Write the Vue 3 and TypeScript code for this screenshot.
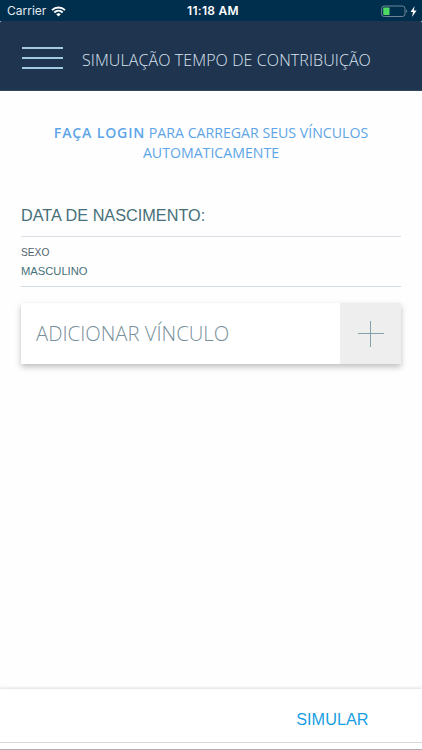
<script setup lang="ts">
import { ref } from 'vue'

const title = ref('SIMULAÇÃO TEMPO DE CONTRIBUIÇÃO')
const gender = ref('MASCULINO')
</script>

<template>
  <div class="screen">
    <div class="status">
      <div class="carrier">
        <span>Carrier</span>
        <svg class="wifi" width="15" height="11" viewBox="0 0 15 11">
          <path d="M1 4.100C4.700 .6 10.300 .6 14 4.100M3.300 6.500C5.700 4.200 9.300 4.200 11.700 6.500" fill="none" stroke="#fff" stroke-width="1.9" />
          <path d="M5.200 8.200C6.500 7 8.500 7 9.800 8.200L7.500 10.500Z" fill="#fff" />
        </svg>
      </div>
      <div class="clock">11:18 AM</div>
      <div class="power">
        <svg width="37" height="13" viewBox="0 0 37 13">
          <rect x="0.600" y="1" width="23.400" height="10.500" rx="2.600" fill="none" stroke="#6d8798" stroke-width="1" />
          <rect x="2.200" y="2.600" width="6.300" height="7.300" rx="0.600" fill="#4cd964" />
          <path d="M25.200 4.600C26.600 5.200 26.600 7.300 25.200 7.900Z" fill="#6d8798" />
          <path d="M33.600 1L29.600 7H32L31 12L35.600 5.500H32.800Z" fill="#fff" />
        </svg>
      </div>
    </div>
    <header class="header">
      <button class="menu" aria-label="Menu"><i></i><i></i><i></i></button>
      <h1>{{ title }}</h1>
    </header>
    <main class="content">
      <p class="login">
        <b>FAÇA LOGIN</b> PARA CARREGAR SEUS VÍNCULOS<br />AUTOMATICAMENTE
      </p>
      <div class="birth">DATA DE NASCIMENTO:</div>
      <div class="gender">
        <span class="label">SEXO</span>
        <span class="value">{{ gender }}</span>
      </div>
      <div class="card">
        <span class="card-text">ADICIONAR VÍNCULO</span>
        <button class="add" aria-label="Adicionar">
          <svg width="26" height="26" viewBox="0 0 26 26">
            <path d="M12.500 0V26M0 12.500H26" stroke="#82a3ab" stroke-width="1" fill="none" />
          </svg>
        </button>
      </div>
    </main>
    <footer class="footer">
      <button class="simulate">SIMULAR</button>
    </footer>
    <div class="bottom"></div>
  </div>
</template>

<style>
body {
  margin: 0;
  background: #fff;
}
</style>

<style scoped>
.screen {
  width: 422px;
  height: 750px;
  display: flex;
  flex-direction: column;
  overflow: hidden;
  background: #fefefe;
  font-family: "Liberation Sans", Arial, sans-serif;
}
button {
  border: 0;
  padding: 0;
  background: none;
  font: inherit;
}
.status {
  height: 21px;
  flex: none;
  box-sizing: border-box;
  display: grid;
  grid-template-columns: 1fr auto 1fr;
  align-items: center;
  padding: 1px 3px 0 7px;
  background: #002e4d;
  color: #fff;
  font: 12px/20px Inter, sans-serif;
}
.carrier {
  display: flex;
  align-items: center;
  gap: 5px;
  letter-spacing: 0;
  color: #e4ebef;
}
.clock {
  font-weight: 600;
  letter-spacing: 0.3px;
}
.power {
  display: flex;
  justify-content: flex-end;
  padding-right: 1px;
}
.header {
  height: 70px;
  flex: none;
  box-sizing: border-box;
  display: flex;
  align-items: center;
  padding: 4px 0 0 22px;
  background: #1f344e;
  border-bottom: 1px solid #34475e;
  border-radius: 1.500px 1.500px 0 0;
}
.menu {
  width: 41px;
  display: flex;
  flex-direction: column;
  gap: 8px;
}
.menu i {
  height: 2px;
  background: #a3c9e3;
}
h1 {
  margin: 4px 0 0 19px;
  font: 300 16px/22px "Open Sans", sans-serif;
  letter-spacing: 0.1px;
  color: #dce5f2;
  white-space: nowrap;
}
.content {
  flex: 1;
  padding: 32px 21px 0;
}
.login {
  margin: 0;
  text-align: center;
  font: 14.150px/20px "Open Sans", sans-serif;
  color: #5da5e8;
  white-space: nowrap;
}
.login b {
  font-weight: 600;
  letter-spacing: 0.8px;
}
.birth {
  margin-top: 41px;
  height: 32px;
  border-bottom: 1px solid #d9dfe4;
  font-size: 16.250px;
  line-height: 22px;
  color: #467079;
}
.gender {
  height: 49px;
  display: flex;
  flex-direction: column;
  border-bottom: 1px solid #d3dce5;
  color: #467079;
}
.label {
  margin-top: 9px;
  font-size: 10.200px;
  line-height: 14px;
  color: #52636e;
}
.value {
  margin-top: 4px;
  font-size: 11.200px;
  line-height: 14px;
}
.card {
  margin-top: 16px;
  height: 61px;
  display: flex;
  background: #fff;
  box-shadow: 0 3px 6px rgba(0, 0, 0, 0.25);
}
.card-text {
  flex: 1;
  padding-left: 15px;
  font: 300 20.250px/60px "Open Sans", sans-serif;
  color: #78909a;
  white-space: nowrap;
}
.add {
  width: 61px;
  display: flex;
  align-items: center;
  justify-content: center;
  background: #eee;
}
.footer {
  height: 54px;
  flex: none;
  box-sizing: border-box;
  display: flex;
  align-items: center;
  justify-content: flex-end;
  padding: 7px 53.500px 0 0;
  background: #fff;
  border-bottom: 1px solid #d8d8d8;
  box-shadow: 0 -1px 3px rgba(0, 0, 0, 0.13);
}
.simulate {
  font-size: 16.250px;
  line-height: 20px;
  color: #199fe3;
}
.bottom {
  height: 7px;
  flex: none;
  box-sizing: border-box;
  border-bottom: 1px solid #b0b0b0;
  background: #fff;
}
</style>
